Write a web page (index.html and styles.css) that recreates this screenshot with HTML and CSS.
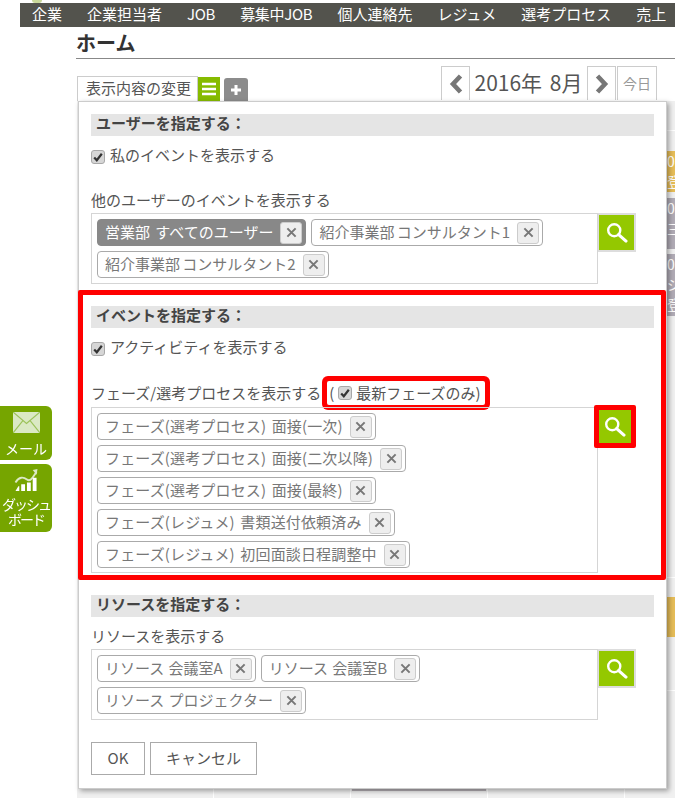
FILE: index.html
```html
<!DOCTYPE html>
<html lang="ja">

<head>
    <meta charset="UTF-8">
    <title>ホーム</title>
    <link rel="stylesheet" href="styles.css">
</head>

<body>
    <svg class="sprite" aria-hidden="true">
        <symbol id="iconX" viewBox="0 0 12 12">
            <path d="M1.5 1.5l9 9M10.5 1.5l-9 9" fill="none" stroke="#777" stroke-width="2.2" />
        </symbol>
        <symbol id="iconSearch" viewBox="0 0 24 24">
            <circle cx="9" cy="9" r="6.6" fill="none" stroke="#fff" stroke-width="2.6" />
            <path d="M13.8 13.8l8 7" fill="none" stroke="#fff" stroke-width="3.4" stroke-linecap="round" />
        </symbol>
        <symbol id="iconCheck" viewBox="0 0 14 14">
            <rect x="0.5" y="0.5" width="13" height="13" rx="2.5" fill="#d6d6d6" stroke="#a8a8a8" />
            <path d="M3.2 7.4l2.6 2.8 5-6.4" fill="none" stroke="#333" stroke-width="2.2" />
        </symbol>
    </svg>

    <div class="logo-strip"><span class="logo-tip"></span></div>
    <nav class="main-nav">
        <a>企業</a>
        <a>企業担当者</a>
        <a class="nav-latin">JOB</a>
        <a class="nav-latin">募集中JOB</a>
        <a>個人連絡先</a>
        <a>レジュメ</a>
        <a>選考プロセス</a>
        <a>売上</a>
    </nav>

    <main class="content">
        <h1 class="page-title">ホーム</h1>

        <div class="toolbar">
            <div class="tabs">
                <span class="tab-label">表示内容の変更</span>
                <span class="tab-btn tab-btn-green">
                    <svg width="14" height="14" viewBox="0 0 14 14">
                        <path d="M0 2h14M0 7h14M0 12h14" stroke="#fff" stroke-width="2.4" />
                    </svg>
                </span>
                <span class="tab-btn tab-btn-grey">
                    <svg width="12" height="12" viewBox="0 0 12 12">
                        <path d="M6 1v10M1 6h10" stroke="#fff" stroke-width="3" />
                    </svg>
                </span>
            </div>
            <div class="month-nav">
                <span class="month-btn">
                    <svg width="14" height="20" viewBox="0 0 14 20">
                        <path d="M11.5 2L4 10l7.500 8" fill="none" stroke="#777" stroke-width="4.600" />
                    </svg>
                </span>
                <span class="month-title">2016年 8月</span>
                <span class="month-btn">
                    <svg width="14" height="20" viewBox="0 0 14 20">
                        <path d="M2.500 2L10 10l-7.500 8" fill="none" stroke="#777" stroke-width="4.600" />
                    </svg>
                </span>
                <span class="today-btn">今日</span>
            </div>
        </div>

        <div class="calendar">
            <div class="cal-cells">
                <div class="cal-line cal-line-first"></div>
                <div class="cal-event cal-event-gold">0<br>登</div>
                <div class="cal-event cal-event-grey">0<br>三</div>
                <div class="cal-event cal-event-grey cal-event-tall">0<br>ジ<br>登</div>
                <div class="cal-line cal-line-mid"></div>
                <div class="cal-event cal-event-gold cal-event-last"></div>
                <div class="cal-line cal-line-low"></div>
            </div>
            <div class="cal-bar"></div>
        </div>
    </main>

    <div class="dock">
        <a class="dock-item dock-mail">
            <svg width="27" height="21" viewBox="0 0 30 22" preserveAspectRatio="none">
                <rect width="30" height="22" fill="#dbe9c4" />
                <path d="M0 0l15 12L30 0M0 22l11-13M30 22L19 9" fill="none" stroke="#9cc25a" stroke-width="1.3" />
            </svg>
            <span>メール</span>
        </a>
        <a class="dock-item dock-board">
            <svg width="26" height="23" viewBox="0 0 26 24">
                <path d="M2 14C6 8 10 8 14 11S21 7 24 3" fill="none" stroke="#dbe9c4" stroke-width="2" />
                <path d="M20 1l5-1-1 6z" fill="#dbe9c4" />
                <path d="M2 23l3-5h1v5zM8 23v-7h4v7zM14 23v-9h4v9zM20 23V9h4v14z" fill="#fff" />
            </svg>
            <span>ダッシュ<br>ボード</span>
        </a>
    </div>

    <div class="popup">
        <section class="popup-section">
            <h3 class="section-head">ユーザーを指定する：</h3>
            <label class="check-row">
                <svg class="check"><use href="#iconCheck" /></svg>私のイベントを表示する
            </label>
            <div class="field-label">他のユーザーのイベントを表示する</div>
            <div class="picker">
                <div class="chip-box">
                    <span class="chip chip-selected">営業部 すべてのユーザー<i class="chip-x"><svg><use href="#iconX" /></svg></i></span>
                    <span class="chip chip-narrow">紹介事業部 コンサルタント1<i class="chip-x"><svg><use href="#iconX" /></svg></i></span>
                    <span class="chip chip-narrow">紹介事業部 コンサルタント2<i class="chip-x"><svg><use href="#iconX" /></svg></i></span>
                </div>
                <span class="search-btn"><svg><use href="#iconSearch" /></svg></span>
            </div>
        </section>

        <section class="popup-section popup-section-marked">
            <h3 class="section-head">イベントを指定する：</h3>
            <label class="check-row">
                <svg class="check"><use href="#iconCheck" /></svg>アクティビティを表示する
            </label>
            <div class="field-label field-label-phase">
                フェーズ/選考プロセスを表示する
                <span class="latest-only">(<svg class="check"><use href="#iconCheck" /></svg>最新フェーズのみ)</span>
            </div>
            <div class="picker">
                <div class="chip-box chip-box-phase">
                    <span class="chip">フェーズ(選考プロセス) 面接(一次)<i class="chip-x"><svg><use href="#iconX" /></svg></i></span>
                    <span class="chip">フェーズ(選考プロセス) 面接(二次以降)<i class="chip-x"><svg><use href="#iconX" /></svg></i></span>
                    <span class="chip">フェーズ(選考プロセス) 面接(最終)<i class="chip-x"><svg><use href="#iconX" /></svg></i></span>
                    <span class="chip">フェーズ(レジュメ) 書類送付依頼済み<i class="chip-x"><svg><use href="#iconX" /></svg></i></span>
                    <span class="chip">フェーズ(レジュメ) 初回面談日程調整中<i class="chip-x"><svg><use href="#iconX" /></svg></i></span>
                </div>
                <span class="search-btn search-btn-marked"><svg><use href="#iconSearch" /></svg></span>
            </div>
        </section>

        <section class="popup-section popup-section-resource">
            <h3 class="section-head">リソースを指定する：</h3>
            <div class="field-label field-label-resource">リソースを表示する</div>
            <div class="picker">
                <div class="chip-box chip-box-resource">
                    <span class="chip">リソース 会議室A<i class="chip-x"><svg><use href="#iconX" /></svg></i></span>
                    <span class="chip">リソース 会議室B<i class="chip-x"><svg><use href="#iconX" /></svg></i></span>
                    <span class="chip">リソース プロジェクター<i class="chip-x"><svg><use href="#iconX" /></svg></i></span>
                </div>
                <span class="search-btn"><svg><use href="#iconSearch" /></svg></span>
            </div>
        </section>

        <div class="popup-buttons">
            <button class="btn btn-ok">OK</button>
            <button class="btn btn-cancel">キャンセル</button>
        </div>
    </div>
</body>

</html>
```

FILE: styles.css
```css
* {
    box-sizing: border-box;
}

html,
body {
    height: 799px;
    overflow: hidden;
}

body {
    margin: 0;
    background-color: white;
    color: #555;
    font-family: "Noto Sans CJK JP", "Liberation Sans", sans-serif;
    font-size: 15px;
    line-height: 24px;
}

.sprite {
    display: none;
}

.logo-strip {
    height: 3px;
    padding-left: 32px;
    overflow: hidden;
}

.logo-tip {
    display: block;
    width: 10px;
    height: 3px;
    background-color: #c9d89a;
    border-radius: 0 0 5px 5px;
}

.main-nav {
    display: flex;
    gap: 25px;
    height: 24px;
    margin-left: 20px;
    padding-left: 12px;
    background-color: #53534d;
    color: white;
    line-height: 22px;
    white-space: nowrap;
    overflow: hidden;
}

.nav-latin {
    letter-spacing: -0.3px;
}

.content {
    padding-left: 76px;
}

.page-title {
    height: 32px;
    margin: 0;
    border-bottom: 1px solid #888;
    padding-top: 4px;
    color: #333;
    font-size: 20px;
    line-height: 24px;
}

.toolbar {
    display: flex;
    justify-content: space-between;
    align-items: flex-end;
    height: 42px;
    padding-left: 1px;
    padding-right: 18px;
}

.tabs {
    display: flex;
    align-items: flex-end;
}

.tab-label {
    width: 121px;
    height: 25px;
    padding-left: 8px;
    border: 1px solid #ccc;
    border-bottom: none;
    line-height: 22px;
}

.tab-btn {
    display: flex;
    justify-content: center;
    align-items: center;
    height: 24px;
}

.tab-btn-green {
    width: 22px;
    background-color: #86bb00;
}

.tab-btn-grey {
    width: 24px;
    margin-left: 4px;
    height: 23px;
    background-color: #8c8c8c;
    border-radius: 3px 3px 0 0;
}

.month-nav {
    display: flex;
    align-items: flex-start;
    height: 35px;
}

.month-btn {
    display: flex;
    justify-content: center;
    align-items: center;
    width: 29px;
    height: 34px;
    border: 1px solid #ccc;
    border-bottom: none;
}

.month-title {
    width: 117px;
    text-align: center;
    font-size: 21px;
    line-height: 32px;
    word-spacing: 3px;
}

.today-btn {
    width: 40px;
    height: 34px;
    margin-left: 1px;
    border: 1px solid #ccc;
    border-bottom: none;
    color: #999;
    font-size: 14px;
    line-height: 33px;
    text-align: center;
}

.calendar {
    height: 697px;
    margin-left: 1px;
    background: repeating-linear-gradient(90deg, #f0f0f0 0, #f0f0f0 136px, white 136px, white 137px);
    overflow: hidden;
}

.cal-cells {
    margin-left: 590px;
    padding-top: 29px;
    height: 686px;
    color: white;
    font-size: 14px;
    line-height: 20px;
}

.cal-line {
    height: 1px;
    background-color: white;
}

.cal-line-first {
    margin-bottom: 20px;
}

.cal-line-mid {
    margin-top: 261px;
}

.cal-line-low {
    margin-top: 53px;
}

.cal-event {
    height: 41px;
    margin-bottom: 6px;
    overflow: hidden;
}

.cal-event-gold {
    background-color: #e6bd58;
}

.cal-event-grey {
    height: 51px;
    background-color: #b0abb5;
    margin-bottom: 5px;
}

.cal-event-tall {
    height: 62px;
    margin-bottom: 0;
}

.cal-event-last {
    margin-top: 19px;
    margin-bottom: 0;
    height: 40px;
}

.cal-bar {
    width: 134px;
    height: 4px;
    margin-left: 275px;
    background-color: #b5b0b5;
}

.dock {
    position: fixed;
    left: 0;
    top: 406px;
    display: flex;
    flex-direction: column;
    gap: 4px;
    width: 52px;
    color: white;
    text-align: center;
}

.dock-item {
    display: flex;
    flex-direction: column;
    align-items: center;
    background-color: #76a500;
    border-radius: 0 6px 6px 0;
    white-space: nowrap;
}

.dock-mail {
    height: 54px;
    padding-top: 6px;
    font-size: 14px;
    line-height: 20px;
}

.dock-mail span {
    margin-top: 5px;
}

.dock-board {
    height: 68px;
    padding-top: 5px;
    font-size: 14px;
    line-height: 15px;
    letter-spacing: -2px;
}

.dock-board span {
    margin-top: 5px;
}

.popup {
    position: absolute;
    left: 78px;
    top: 101px;
    width: 589px;
    height: 688px;
    padding: 12px 12px 0;
    background-color: white;
    border: 1px solid #ccc;
    box-shadow: 2px 2px 5px rgba(0, 0, 0, 0.35);
}

.section-head {
    height: 22px;
    margin: 0;
    padding-left: 5px;
    background-color: #e5e5e5;
    color: #444;
    font-size: 15px;
    line-height: 18px;
}

.check-row {
    display: flex;
    gap: 5px;
    height: 24px;
    margin-top: 8px;
    line-height: 22px;
}

.check {
    width: 14px;
    height: 14px;
    margin-top: 6px;
    flex: none;
}

.field-label {
    height: 24px;
    margin-top: 21px;
    line-height: 22px;
}

.field-label-phase {
    display: flex;
    align-items: center;
    height: 26px;
    margin-top: 21px;
    padding-bottom: 3px;
    white-space: nowrap;
}

.field-label-resource {
    margin-top: 8px;
}

.latest-only {
    display: inline-flex;
    align-items: center;
    height: 24px;
    margin-left: 6px;
    padding: 0 4px 0 2px;
    border-radius: 2px;
    box-shadow: 0 0 0 5px red;
}

.latest-only .check {
    margin: 1px 4px 0;
}

.picker {
    display: flex;
    align-items: flex-start;
}

.chip-box {
    display: flex;
    flex-wrap: wrap;
    align-content: flex-start;
    gap: 5px;
    width: 507px;
    min-height: 71px;
    padding: 5px;
    border: 1px solid #d5d5d5;
}

.chip-box-phase {
    padding-bottom: 4px;
    letter-spacing: 0.15px;
}

.chip {
    display: inline-flex;
    align-items: center;
    height: 27px;
    padding: 0 3px 2px 7px;
    border: 1px solid #aaa;
    border-radius: 4px;
    color: #777;
    white-space: nowrap;
    word-spacing: 2px;
}

.chip-box-resource .chip {
    word-spacing: 1px;
}

.chip-narrow {
    word-spacing: -1px;
}

.chip-selected {
    background-color: #888;
    border-color: #888;
    color: white;
}

.chip-x {
    display: flex;
    justify-content: center;
    align-items: center;
    width: 22px;
    height: 22px;
    margin-left: 7px;
    margin-bottom: -2px;
    background-color: #eee;
    border: 1px solid #ccc;
    border-radius: 3px;
}

.chip-x svg {
    width: 11px;
    height: 11px;
}

.search-btn {
    display: flex;
    justify-content: center;
    align-items: center;
    width: 38px;
    height: 39px;
    background-color: #94c800;
    border: 2px solid #ddd;
    border-left-width: 1px;
}

.search-btn svg {
    width: 22px;
    height: 22px;
}

.search-btn-marked {
    width: 42px;
    height: 43px;
    margin: -2px 0 0 -4px;
    border: 5px solid red;
    border-radius: 2px;
}

.popup-section-marked {
    margin: 6px -12px 0 -13px;
    padding: 11px 7px 2px 8px;
    border: 5px solid red;
    border-radius: 2px;
}

.popup-section-resource {
    margin-top: 15px;
}

.popup-buttons {
    display: flex;
    gap: 5px;
    margin-top: 22px;
}

.btn {
    height: 33px;
    padding: 0 0 3px;
    background-color: white;
    border: 1px solid #aaa;
    color: #555;
    font-family: inherit;
    font-size: 15px;
}

.btn-ok {
    width: 54px;
}

.btn-cancel {
    width: 107px;
}
```
